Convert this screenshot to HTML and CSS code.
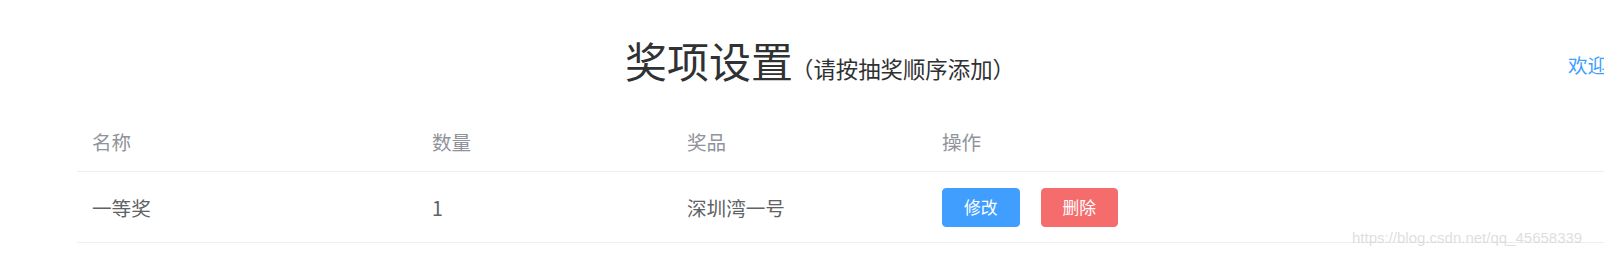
FILE: index.html
```html
<!DOCTYPE html>
<html lang="zh-CN">
<head>
<meta charset="utf-8">
<title>奖项设置</title>
<link rel="stylesheet" href="styles.css">
</head>
<body>
<div class="page">
  <header class="header">
    <div class="title-wrap">
      <span class="title">奖项设置</span><span class="subtitle">（请按抽奖顺序添加）</span>
    </div>
    <div class="welcome">欢迎您，管理员</div>
  </header>
  <table class="prize-table">
    <colgroup>
      <col class="c1"><col class="c2"><col class="c3"><col class="c4">
    </colgroup>
    <thead>
      <tr><th>名称</th><th>数量</th><th>奖品</th><th>操作</th></tr>
    </thead>
    <tbody>
      <tr>
        <td>一等奖</td>
        <td>1</td>
        <td>深圳湾一号</td>
        <td><button class="btn btn-primary">修改</button><button class="btn btn-danger">删除</button></td>
      </tr>
    </tbody>
  </table>
  <div class="watermark">https://blog.csdn.net/qq_45658339</div>
</div>
</body>
</html>
```

FILE: styles.css
```css
html, body {
  margin: 0;
  padding: 0;
  background: #ffffff;
}
body {
  width: 1604px;
  height: 257px;
  overflow: hidden;
  font-family: "Noto Sans CJK SC", "Noto Sans", sans-serif;
}
.page {
  position: relative;
  width: 1604px;
  height: 257px;
}
.header {
  display: grid;
  grid-template-columns: 625px 943px auto;
  height: 112px;
  align-items: center;
}
.title-wrap {
  grid-column: 2;
  white-space: nowrap;
  padding-top: 10px;
}
.title {
  font-size: 42px;
  color: #303133;
  line-height: 42px;
}
.subtitle {
  font-size: 22.4px;
  color: #303133;
  margin-left: -2px;
}
.welcome {
  grid-column: 3;
  font-size: 19.6px;
  color: #409eff;
  white-space: nowrap;
  padding-top: 16px;
}
.prize-table {
  margin-left: 77px;
  width: 1527px;
  border-collapse: collapse;
  table-layout: fixed;
  font-size: 19.6px;
}
.c1 { width: 340px; }
.c2 { width: 255px; }
.c3 { width: 255px; }
.prize-table th,
.prize-table td {
  text-align: left;
  padding: 0 0 0 15px;
  border-bottom: 1px solid #ebeef5;
  font-weight: normal;
}
.prize-table th {
  height: 59px;
  color: #909399;
}
.prize-table td {
  height: 70px;
  color: #606266;
}
.btn {
  height: 39px;
  padding: 0 21px;
  border-radius: 4px;
  font-family: "Noto Sans CJK SC", sans-serif;
  font-size: 16.8px;
  color: #ffffff;
  border: 1px solid transparent;
  vertical-align: middle;
  line-height: 1;
}
.btn + .btn {
  margin-left: 21px;
}
.btn-primary {
  background: #409eff;
  border-color: #409eff;
}
.btn-danger {
  background: #f56c6c;
  border-color: #f56c6c;
}
.watermark {
  position: absolute;
  left: 1352px;
  top: 229px;
  font-family: "Liberation Sans", Arial, sans-serif;
  font-size: 15px;
  color: rgba(200, 200, 205, 0.6);
  white-space: nowrap;
}
```
